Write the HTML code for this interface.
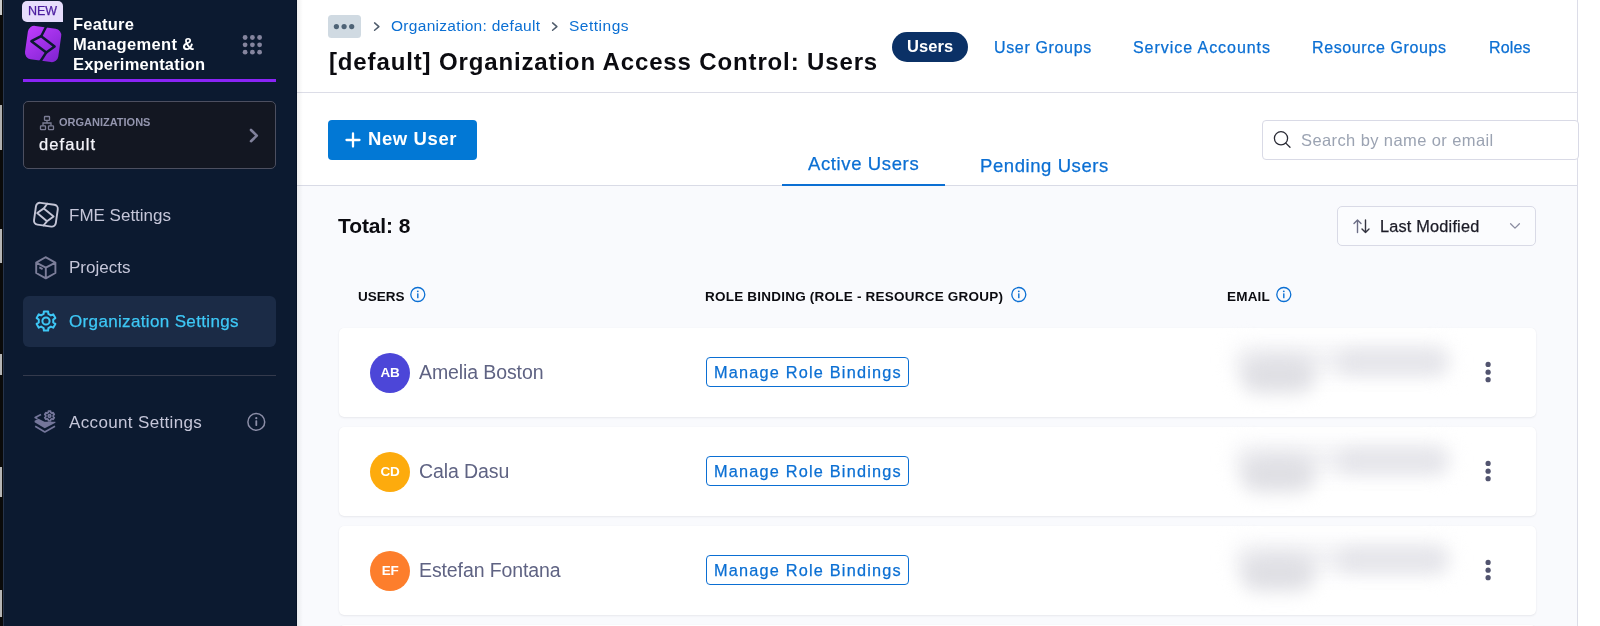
<!DOCTYPE html>
<html><head><meta charset="utf-8">
<style>
*{box-sizing:border-box;margin:0;padding:0}
html,body{width:1600px;height:626px;overflow:hidden;background:#fff;font-family:"Liberation Sans",sans-serif;-webkit-font-smoothing:antialiased}
.a{position:absolute}
.t{position:absolute;line-height:1;white-space:nowrap;will-change:transform}
.m{-webkit-text-stroke:0.25px currentColor}
#strip{left:0;top:0;width:3px;height:626px;background:#0a0a0a}
#side{left:3px;top:0;width:294px;height:626px;background:#0c1a30;border-left:1px solid #27344a;border-right:1px solid #061226}
#main{left:297px;top:0;width:1281px;height:626px;background:#f9fafd}
.card{width:1197px;height:89px;background:#fff;border-radius:5px;box-shadow:0 1px 2px rgba(40,41,61,0.08),0 0 1px rgba(40,41,61,0.06)}
.blur1{background:#dfdfe4;filter:blur(9px);border-radius:16px}
.blur2{background:#e5e5ea;filter:blur(8px);border-radius:12px}
.blur3{background:#f2f2f5;filter:blur(10px);border-radius:12px}
</style></head><body>
<div id="strip" class="a">
  <div class="a" style="left:0;top:0;width:2px;height:15px;background:#c9c9c9"></div>
  <div class="a" style="left:0;top:105px;width:2px;height:45px;background:#aeaeae"></div>
  <div class="a" style="left:0;top:229px;width:2px;height:34px;background:#b5b5b5"></div>
  <div class="a" style="left:0;top:354px;width:2px;height:21px;background:#b5b5b5"></div>
  <div class="a" style="left:0;top:467px;width:2px;height:30px;background:#b5b5b5"></div>
  <div class="a" style="left:0;top:590px;width:2px;height:27px;background:#b5b5b5"></div>
</div>
<div id="side" class="a"></div>

<!-- SIDEBAR -->
<div class="a" style="left:22px;top:1px;width:41px;height:21px;background:#e6ddfc;border-radius:5px 5px 0 5px"></div>
<div class="t m" style="left:28px;top:5.2px;font-size:12.5px;color:#4a1c9f;letter-spacing:0px">NEW</div>
<svg class="a" style="left:22px;top:22px" width="44" height="44" viewBox="0 0 44 44">
 <defs><linearGradient id="lg" x1="0" y1="0" x2="1" y2="1"><stop offset="0" stop-color="#c13dff"/><stop offset="1" stop-color="#7d23cf"/></linearGradient></defs>
 <rect x="4.3" y="5.2" width="33.6" height="33.6" rx="6.5" transform="rotate(8 21.1 22)" fill="url(#lg)"/>
 <path d="M9.4 19.2 L19.2 14.2 L32.6 24.6 L24.3 30.4 Z" stroke="#0c1a30" stroke-width="2.5" fill="none" stroke-linejoin="round"/><path d="M19.2 14.2 L25 3 M24.3 30.4 L17 41.5" stroke="#0c1a30" stroke-width="2.5" fill="none" stroke-linecap="butt"/>
</svg>
<div class="t" style="left:73px;top:15.93px;font-size:16.5px;font-weight:700;color:#fff;letter-spacing:0.2px">Feature</div>
<div class="t" style="left:73px;top:35.73px;font-size:16.5px;font-weight:700;color:#fff;letter-spacing:0.35px">Management &amp;</div>
<div class="t" style="left:73px;top:56.43px;font-size:16.5px;font-weight:700;color:#fff;letter-spacing:0.2px">Experimentation</div>
<svg class="a" style="left:240px;top:33px" width="24" height="24">
 <g fill="#85859e"><circle cx="5.1" cy="4.5" r="2.4"/><circle cx="12.4" cy="4.5" r="2.4"/><circle cx="19.6" cy="4.5" r="2.4"/>
 <circle cx="5.1" cy="11.8" r="2.4"/><circle cx="12.4" cy="11.8" r="2.4"/><circle cx="19.6" cy="11.8" r="2.4"/>
 <circle cx="5.1" cy="19.2" r="2.4"/><circle cx="12.4" cy="19.2" r="2.4"/><circle cx="19.6" cy="19.2" r="2.4"/></g>
</svg>
<div class="a" style="left:23px;top:78.5px;width:253px;height:3px;background:#8a24f6"></div>

<div class="a" style="left:23px;top:101px;width:253px;height:68px;background:#131722;border:1px solid #4c4f60;border-radius:5px"></div>
<svg class="a" style="left:38px;top:114px" width="18" height="18" viewBox="0 0 18 18">
 <g fill="none" stroke="#7b7d95" stroke-width="1.3">
 <rect x="6.5" y="2.5" width="5" height="3.8" rx="0.6"/><rect x="2.5" y="11.8" width="5" height="3.8" rx="0.6"/><rect x="10.5" y="11.8" width="5" height="3.8" rx="0.6"/>
 <path d="M9 6.3 V9 M5 11.8 V9 H13 V11.8"/></g>
</svg>
<div class="t" style="left:59px;top:117.39px;font-size:11px;font-weight:700;color:#9395ae;letter-spacing:0px">ORGANIZATIONS</div>
<div class="t m" style="left:39px;top:135.83px;font-size:16.5px;color:#f4f4fa;letter-spacing:1.1px">default</div>
<svg class="a" style="left:246px;top:126px" width="16" height="20" viewBox="0 0 16 20">
 <path d="M5 4 L10.8 9.6 L5 15.2" fill="none" stroke="#80819b" stroke-width="2.6" stroke-linecap="round" stroke-linejoin="round"/>
</svg>

<svg class="a" style="left:28px;top:196px" width="36" height="36" viewBox="0 0 36 36">
 <g fill="none" stroke="#c4c5d6" stroke-width="1.9" stroke-linejoin="round">
 <rect x="6.9" y="7.7" width="22" height="22" rx="4" transform="rotate(8 17.9 18.7)"/>
 <path d="M9.2 17 L15.8 12.4 L25.6 20.4 L19 25.3 Z M15.8 12.4 L19.8 7 M19 25.3 L15 30"/></g>
</svg>
<div class="t" style="left:68.5px;top:206.51px;font-size:17px;color:#c5c6d9">FME Settings</div>

<svg class="a" style="left:30px;top:252px" width="32" height="32" viewBox="0 0 32 32">
 <g fill="none" stroke="#7c7e99" stroke-width="1.9" stroke-linejoin="round">
 <path d="M15.5 5.2 L25.4 10.6 L25.4 21 L15.8 26.4 L6.2 21 L6.2 10.6 Z M6.2 10.6 L15.8 15.6 L25.4 10.6 M15.8 15.6 V26.4 M9.3 15.4 L12.6 17.2"/></g>
</svg>
<div class="t" style="left:68.5px;top:259.41px;font-size:17px;color:#c5c6d9">Projects</div>

<div class="a" style="left:23px;top:296px;width:253px;height:51px;background:#1b2b46;border-radius:6px"></div>
<svg class="a" style="left:30px;top:305px" width="32" height="32" viewBox="0 0 32 32">
 <path d="M13.64 8.99 L13.86 6.44 L18.14 6.44 L18.36 8.99 L20.89 10.45 L23.21 9.37 L25.35 13.07 L23.25 14.54 L23.25 17.46 L25.35 18.93 L23.21 22.63 L20.89 21.55 L18.36 23.01 L18.14 25.56 L13.86 25.56 L13.64 23.01 L11.11 21.55 L8.79 22.63 L6.65 18.93 L8.75 17.46 L8.75 14.54 L6.65 13.07 L8.79 9.37 L11.11 10.45Z" fill="none" stroke="#3ec8f6" stroke-width="2" stroke-linejoin="round"/>
 <circle cx="16" cy="16" r="3.6" fill="none" stroke="#3ec8f6" stroke-width="2"/>
</svg>
<div class="t m" style="left:68.5px;top:313.21px;font-size:17px;color:#3ec8f6;letter-spacing:0.35px">Organization Settings</div>

<div class="a" style="left:23px;top:375px;width:253px;height:1px;background:#343a4c"></div>

<svg class="a" style="left:30px;top:405px" width="32" height="32" viewBox="0 0 32 32">
 <g stroke="#74769a" stroke-width="1.7" stroke-linejoin="round" fill="none">
 <path d="M18.29 7.40 L18.41 6.12 L20.59 6.12 L20.71 7.40 L22.01 8.15 L23.18 7.62 L24.27 9.50 L23.23 10.25 L23.23 11.75 L24.27 12.50 L23.18 14.38 L22.01 13.85 L20.71 14.60 L20.59 15.88 L18.41 15.88 L18.29 14.60 L16.99 13.85 L15.82 14.38 L14.73 12.50 L15.77 11.75 L15.77 10.25 L14.73 9.50 L15.82 7.62 L16.99 8.15Z"/>
 <circle cx="19.5" cy="11" r="1.3"/>
 <path d="M11 9.4 L5.2 12.5 L7.5 13.8"/>
 <path d="M5.2 21.3 L14.8 27 L25 21.3"/></g>
 <path d="M4.6 17.2 L4.6 15.8 L8.5 13.8 L14.5 16.8 L25.4 16.8 L25.4 17.8 L14.8 23.2 Z" fill="#74769a"/>
</svg>
<div class="t" style="left:69px;top:414.11px;font-size:17px;color:#c5c6d9;letter-spacing:0.35px">Account Settings</div>
<svg class="a" style="left:246px;top:411px" width="22" height="22" viewBox="0 0 22 22">
 <circle cx="10.3" cy="10.9" r="8.4" fill="none" stroke="#8c8ea7" stroke-width="1.5"/>
 <circle cx="10.3" cy="7.2" r="1.1" fill="#8c8ea7"/><rect x="9.4" y="9.3" width="1.8" height="5.6" rx="0.6" fill="#8c8ea7"/>
</svg>

<div id="main" class="a"></div>

<!-- MAIN -->
<div class="a" style="left:297px;top:0;width:1280px;height:93px;background:#fff;border-bottom:1px solid #dcdde7"></div>
<div class="a" style="left:297px;top:93px;width:1280px;height:93px;background:#fff;border-bottom:1px solid #d9dbe6"></div>
<div class="a" style="left:1577px;top:0;width:1px;height:626px;background:#dcdde8"></div>
<div class="a" style="left:1578px;top:0;width:22px;height:626px;background:#fff"></div>
<div class="a" style="left:297px;top:0;width:6px;height:626px;background:linear-gradient(90deg,rgba(0,0,0,0.06),rgba(0,0,0,0))"></div>

<div class="a" style="left:328px;top:15px;width:33px;height:23px;background:#d0dae2;border-radius:3.5px"></div>
<svg class="a" style="left:328px;top:15px" width="33" height="23"><g fill="#4e6376"><circle cx="8.4" cy="11.6" r="2.6"/><circle cx="16.1" cy="11.6" r="2.6"/><circle cx="23.7" cy="11.6" r="2.6"/></g></svg>
<svg class="a" style="left:370px;top:19px" width="14" height="16"><path d="M4.6 3.9 L8.9 7.6 L4.6 11.3" fill="none" stroke="#4f5c6c" stroke-width="1.5" stroke-linecap="round" stroke-linejoin="round"/></svg>
<div class="t" style="left:391px;top:18.48px;font-size:15.5px;color:#0b6fd3;letter-spacing:0.3px">Organization: default</div>
<svg class="a" style="left:548px;top:19px" width="14" height="16"><path d="M4.6 3.9 L8.9 7.6 L4.6 11.3" fill="none" stroke="#4f5c6c" stroke-width="1.5" stroke-linecap="round" stroke-linejoin="round"/></svg>
<div class="t" style="left:569px;top:18.48px;font-size:15.5px;color:#0b6fd3;letter-spacing:0.5px">Settings</div>
<div class="t" style="left:328.5px;top:50.28px;font-size:24px;font-weight:700;color:#0b0b10;letter-spacing:0.86px">[default] Organization Access Control: Users</div>

<div class="a" style="left:892px;top:32px;width:76px;height:30px;background:#0b3166;border-radius:15px"></div>
<div class="t" style="left:907px;top:38.33px;font-size:16.5px;font-weight:700;color:#fff;letter-spacing:0.1px">Users</div>
<div class="t m" style="left:993.5px;top:39.6px;font-size:16px;color:#0b6fd3;letter-spacing:0.65px">User Groups</div>
<div class="t m" style="left:1132.5px;top:39.6px;font-size:16px;color:#0b6fd3;letter-spacing:0.95px">Service Accounts</div>
<div class="t m" style="left:1311.5px;top:39.6px;font-size:16px;color:#0b6fd3;letter-spacing:0.62px">Resource Groups</div>
<div class="t m" style="left:1488.5px;top:39.6px;font-size:16px;color:#0b6fd3;letter-spacing:0.15px">Roles</div>

<div class="a" style="left:328px;top:120px;width:149px;height:40px;background:#0278d5;border-radius:4px"></div>
<svg class="a" style="left:343px;top:130px" width="20" height="20"><path d="M10 3.5 V16.5 M3.5 10 H16.5" stroke="#fff" stroke-width="2.3" stroke-linecap="round"/></svg>
<div class="t" style="left:367.5px;top:130.44px;font-size:18.5px;font-weight:700;color:#fff;letter-spacing:0.6px">New User</div>

<div class="t m" style="left:808px;top:155.14px;font-size:18.5px;color:#0b6fd3;letter-spacing:0.62px">Active Users</div>
<div class="a" style="left:782px;top:183.5px;width:163px;height:2.6px;background:#0b6fd3"></div>
<div class="t m" style="left:980px;top:156.94px;font-size:18.5px;color:#0b6fd3;letter-spacing:0.58px">Pending Users</div>

<div class="a" style="left:1262px;top:120px;width:317px;height:40px;background:#fff;border:1px solid #d9dae6;border-radius:4px"></div>
<svg class="a" style="left:1272px;top:129px" width="20" height="20"><circle cx="9" cy="9.3" r="6.6" fill="none" stroke="#2a2b35" stroke-width="1.3"/><path d="M13.8 14.1 L18 18.3" stroke="#2a2b35" stroke-width="1.3" stroke-linecap="round"/></svg>
<div class="t" style="left:1301px;top:131.73px;font-size:16.5px;color:#9ba3b2;letter-spacing:0.4px">Search by name or email</div>


<!-- CONTENT -->
<div class="t" style="left:338px;top:215.12px;font-size:21px;font-weight:700;color:#0b0b10;letter-spacing:-0.1px">Total: 8</div>
<div class="a" style="left:1337px;top:206px;width:199px;height:40px;background:#fbfcfe;border:1px solid #d9dae6;border-radius:5px"></div>
<svg class="a" style="left:1352px;top:217px" width="20" height="18" viewBox="0 0 20 18">
 <path d="M5.5 15.5 V3 M2 6.5 L5.5 3 L9 6.5" fill="none" stroke="#6c6e86" stroke-width="1.4" stroke-linecap="round" stroke-linejoin="round"/>
 <path d="M13.5 3 V15.5 M10 12 L13.5 15.5 L17 12" fill="none" stroke="#33343f" stroke-width="1.4" stroke-linecap="round" stroke-linejoin="round"/>
</svg>
<div class="t m" style="left:1380px;top:217.6px;font-size:16.3px;color:#1b1b26;letter-spacing:0.2px">Last Modified</div>
<svg class="a" style="left:1506px;top:219px" width="18" height="14"><path d="M4.6 4.8 L9 9.1 L13.4 4.8" fill="none" stroke="#8a8ca0" stroke-width="1.3" stroke-linecap="round" stroke-linejoin="round"/></svg>

<div class="t" style="left:358px;top:290.47px;font-size:13.5px;font-weight:700;color:#0b0b10;letter-spacing:0px">USERS</div>
<svg class="a" style="left:408px;top:285px" width="20" height="20"><circle cx="9.8" cy="9.5" r="7" fill="none" stroke="#0b6fd3" stroke-width="1.3"/><circle cx="9.8" cy="6.3" r="0.9" fill="#0b6fd3"/><rect x="9.1" y="8.2" width="1.4" height="5" rx="0.5" fill="#0b6fd3"/></svg>
<div class="t" style="left:705px;top:290.47px;font-size:13.5px;font-weight:700;color:#0b0b10;letter-spacing:0.22px">ROLE BINDING (ROLE - RESOURCE GROUP)</div>
<svg class="a" style="left:1009px;top:285px" width="20" height="20"><circle cx="9.8" cy="9.5" r="7" fill="none" stroke="#0b6fd3" stroke-width="1.3"/><circle cx="9.8" cy="6.3" r="0.9" fill="#0b6fd3"/><rect x="9.1" y="8.2" width="1.4" height="5" rx="0.5" fill="#0b6fd3"/></svg>
<div class="t" style="left:1227px;top:290.47px;font-size:13.5px;font-weight:700;color:#0b0b10;letter-spacing:0.2px">EMAIL</div>
<svg class="a" style="left:1274px;top:285px" width="20" height="20"><circle cx="9.8" cy="9.5" r="7" fill="none" stroke="#0b6fd3" stroke-width="1.3"/><circle cx="9.8" cy="6.3" r="0.9" fill="#0b6fd3"/><rect x="9.1" y="8.2" width="1.4" height="5" rx="0.5" fill="#0b6fd3"/></svg>

<div class="a card" style="left:339px;top:328px"></div>
<div class="a" style="left:370px;top:353px;width:40px;height:40px;border-radius:50%;background:#4c46d8"></div>
<div class="t" style="left:370px;width:40px;text-align:center;top:366.17px;font-size:13.5px;font-weight:700;color:#fff;letter-spacing:-0.3px">AB</div>
<div class="t" style="left:419px;top:363.4px;font-size:19.5px;color:#5f6383;letter-spacing:-0.1px">Amelia Boston</div>
<div class="a" style="left:706px;top:357px;width:203px;height:30px;border:1.5px solid #0b6fd3;border-radius:4px;background:#fff"></div>
<div class="t m" style="left:714px;top:363.7px;font-size:16.3px;color:#0b6fd3;letter-spacing:1.2px">Manage Role Bindings</div>
<div class="a blur3" style="left:1234px;top:345px;width:216px;height:30px"></div>
<div class="a blur1" style="left:1242px;top:356px;width:72px;height:37px"></div>
<div class="a blur2" style="left:1338px;top:350px;width:108px;height:24px"></div>
<svg class="a" style="left:1480px;top:358px" width="16" height="28"><g fill="#52546f"><circle cx="8.1" cy="6.4" r="2.6"/><circle cx="8.1" cy="14.2" r="2.6"/><circle cx="8.1" cy="21.7" r="2.6"/></g></svg>
<div class="a card" style="left:339px;top:427px"></div>
<div class="a" style="left:370px;top:452px;width:40px;height:40px;border-radius:50%;background:#fdab0d"></div>
<div class="t" style="left:370px;width:40px;text-align:center;top:465.17px;font-size:13.5px;font-weight:700;color:#fff;letter-spacing:-0.3px">CD</div>
<div class="t" style="left:419px;top:462.4px;font-size:19.5px;color:#5f6383;letter-spacing:-0.1px">Cala Dasu</div>
<div class="a" style="left:706px;top:456px;width:203px;height:30px;border:1.5px solid #0b6fd3;border-radius:4px;background:#fff"></div>
<div class="t m" style="left:714px;top:462.7px;font-size:16.3px;color:#0b6fd3;letter-spacing:1.2px">Manage Role Bindings</div>
<div class="a blur3" style="left:1234px;top:444px;width:216px;height:30px"></div>
<div class="a blur1" style="left:1242px;top:455px;width:72px;height:37px"></div>
<div class="a blur2" style="left:1338px;top:449px;width:108px;height:24px"></div>
<svg class="a" style="left:1480px;top:457px" width="16" height="28"><g fill="#52546f"><circle cx="8.1" cy="6.4" r="2.6"/><circle cx="8.1" cy="14.2" r="2.6"/><circle cx="8.1" cy="21.7" r="2.6"/></g></svg>
<div class="a card" style="left:339px;top:526px"></div>
<div class="a" style="left:370px;top:551px;width:40px;height:40px;border-radius:50%;background:#fd7e2c"></div>
<div class="t" style="left:370px;width:40px;text-align:center;top:564.17px;font-size:13.5px;font-weight:700;color:#fff;letter-spacing:-0.3px">EF</div>
<div class="t" style="left:419px;top:561.4px;font-size:19.5px;color:#5f6383;letter-spacing:-0.1px">Estefan Fontana</div>
<div class="a" style="left:706px;top:555px;width:203px;height:30px;border:1.5px solid #0b6fd3;border-radius:4px;background:#fff"></div>
<div class="t m" style="left:714px;top:561.7px;font-size:16.3px;color:#0b6fd3;letter-spacing:1.2px">Manage Role Bindings</div>
<div class="a blur3" style="left:1234px;top:543px;width:216px;height:30px"></div>
<div class="a blur1" style="left:1242px;top:554px;width:72px;height:37px"></div>
<div class="a blur2" style="left:1338px;top:548px;width:108px;height:24px"></div>
<svg class="a" style="left:1480px;top:556px" width="16" height="28"><g fill="#52546f"><circle cx="8.1" cy="6.4" r="2.6"/><circle cx="8.1" cy="14.2" r="2.6"/><circle cx="8.1" cy="21.7" r="2.6"/></g></svg>
<div class="a card" style="left:339px;top:625px"></div>
</body></html>
